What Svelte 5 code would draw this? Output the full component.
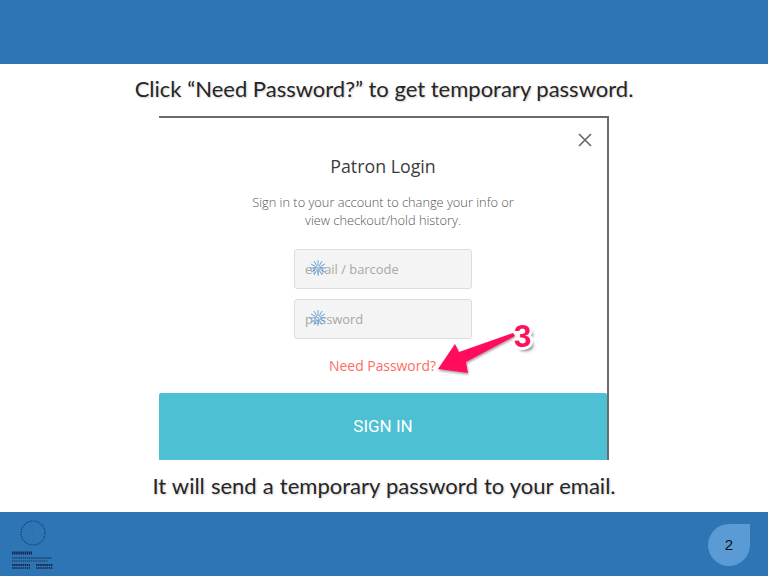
<script>
  const rays = [0, 30, 60, 90, 120, 150];
</script>

{#snippet spinner()}
  <svg class="spin" viewBox="-9 -9 18 18" width="18" height="18" aria-hidden="true">
    {#each rays as a}
      <line x1="-8" y1="0" x2="8" y2="0" transform="rotate({a})" />
    {/each}
    <circle r="2.5" />
  </svg>
{/snippet}

<div class="slide">
  <header class="bar top"></header>
  <main>
    <p class="line first">Click “Need Password?” to get temporary password.</p>
    <section class="modal">
      <svg class="close" viewBox="0 0 14 14" width="14" height="14" aria-hidden="true">
        <path d="M1 1 L13 13 M13 1 L1 13" />
      </svg>
      <h1>Patron Login</h1>
      <p class="sub">Sign in to your account to change your info or<br />view checkout/hold history.</p>
      <div class="field">email / barcode{@render spinner()}</div>
      <div class="field">password{@render spinner()}</div>
      <div class="need">Need Password?</div>
      <div class="sign">SIGN IN</div>
      <svg class="arrow" viewBox="0 0 100 60" width="100" height="60" aria-hidden="true">
        <defs>
          <filter id="sh" x="-20%" y="-20%" width="140%" height="150%">
            <feDropShadow dx="0.5" dy="1.500" stdDeviation="0.8" flood-color="#000" flood-opacity="0.4" />
          </filter>
        </defs>
        <path d="M9 41 L26 16 L30 24 L84 5 L86 8 L37 34 L39 45 Z" fill="#ff0f5c" filter="url(#sh)" />
      </svg>
      <span class="three">3</span>
    </section>
    <p class="line last">It will send a temporary password to your email.</p>
  </main>
  <footer class="bar bottom">
    <svg class="logo" viewBox="0 0 44 52" width="44" height="52" aria-hidden="true">
      <circle cx="21" cy="13" r="12" fill="none" stroke="#1f3f6e" stroke-width="1.2" stroke-dasharray="1.5 1.2" />
      <path d="M21 5 C17 10 25 15 20 21" fill="none" stroke="#3a6ba0" stroke-width="0.8" />
      <g stroke="#16294d" stroke-width="1.8" stroke-dasharray="1.5 .6" fill="none">
        <path d="M0 33 H20" stroke-width="3" />
        <path d="M0 38 H40" stroke-width="1.2" />
        <path d="M0 41 H36" stroke-width="0.8" />
        <path d="M0 45 H18 M24 45 H41" />
        <path d="M0 48 H18 M24 48 H41" stroke-width="1.4" />
      </g>
    </svg>
    <div class="page">2</div>
  </footer>
</div>

<style>
  :global(body) {
    margin: 0;
    background: #fff;
  }
  .slide {
    width: 768px;
    height: 576px;
    display: flex;
    flex-direction: column;
    overflow: hidden;
    font-family: "Open Sans", sans-serif;
  }
  .bar {
    height: 64px;
    flex: none;
    background: #2e75b6;
  }
  .bottom {
    display: flex;
    align-items: flex-start;
    justify-content: space-between;
    padding: 8px 18px 0 12px;
    box-sizing: border-box;
  }
  .logo {
    display: block;
  }
  .page {
    width: 42px;
    height: 42px;
    margin-top: 4px;
    border-radius: 50% 0 50% 50%;
    background: #5b9bd5;
    color: #111;
    font: 15px/42px "Liberation Sans", sans-serif;
    text-align: center;
  }
  main {
    flex: 1;
    display: flex;
    flex-direction: column;
    align-items: center;
  }
  .line {
    margin: 0;
    font-family: Lato, sans-serif;
    font-size: 22px;
    line-height: 30px;
    color: #262626;
    text-shadow: 1px 1px 2px rgba(0, 0, 0, 0.2);
    white-space: nowrap;
  }
  .first {
    margin-top: 10px;
    margin-bottom: 12px;
  }
  .last {
    margin-top: 11px;
    word-spacing: 0.5px;
  }
  .modal {
    position: relative;
    width: 450px;
    height: 344px;
    box-sizing: border-box;
    border-top: 2px solid #6b6b6b;
    border-right: 2px solid #6b6b6b;
    display: flex;
    flex-direction: column;
    align-items: center;
    padding-top: 34px;
  }
  .close {
    position: absolute;
    top: 15px;
    right: 15px;
    fill: none;
    stroke: #666;
    stroke-width: 1.6;
  }
  h1 {
    margin: 0;
    font-size: 17.800px;
    font-weight: 400;
    line-height: 28px;
    color: #3c3c3c;
  }
  .sub {
    margin: 13px 0 0;
    font-size: 12.800px;
    font-weight: 300;
    line-height: 18px;
    text-align: center;
    color: #555;
  }
  .field {
    position: relative;
    width: 178px;
    height: 40px;
    box-sizing: border-box;
    margin-top: 10px;
    padding-left: 10px;
    border: 1px solid #ddd;
    border-radius: 3px;
    background: #f4f4f4;
    color: #a8a8a8;
    font-size: 12.900px;
    line-height: 38px;
  }
  .sub + .field {
    margin-top: 20px;
  }
  .spin {
    position: absolute;
    left: 14px;
    top: 9px;
  }
  .spin line {
    stroke: #4a94de;
    stroke-width: 0.8;
    stroke-dasharray: 5 6 5;
  }
  .spin circle {
    fill: none;
    stroke: #4a94de;
    stroke-width: 0.6;
  }
  .need {
    margin-top: 13px;
    margin-left: -1px;
    font-size: 13.900px;
    line-height: 28px;
    color: #ff6b60;
  }
  .sign {
    margin-top: 13px;
    align-self: stretch;
    height: 67px;
    background: #4dc0d3;
    color: #fff;
    font-family: Roboto, sans-serif;
    font-size: 17px;
    line-height: 67px;
    text-align: center;
    border-radius: 2px 2px 0 0;
  }
  .arrow {
    position: absolute;
    left: 270px;
    top: 210px;
    overflow: visible;
  }
  .three {
    position: absolute;
    left: 355px;
    top: 199px;
    font: bold 31px/40px "Liberation Sans", sans-serif;
    color: #ff0f5c;
    text-shadow:
      3px 0 0 #fff, -3px 0 0 #fff, 0 3px 0 #fff, 0 -3px 0 #fff,
      2px 2px 0 #fff, -2px 2px 0 #fff, 2px -2px 0 #fff, -2px -2px 0 #fff,
      3px 4px 3px rgba(0, 0, 0, 0.5);
  }
</style>
